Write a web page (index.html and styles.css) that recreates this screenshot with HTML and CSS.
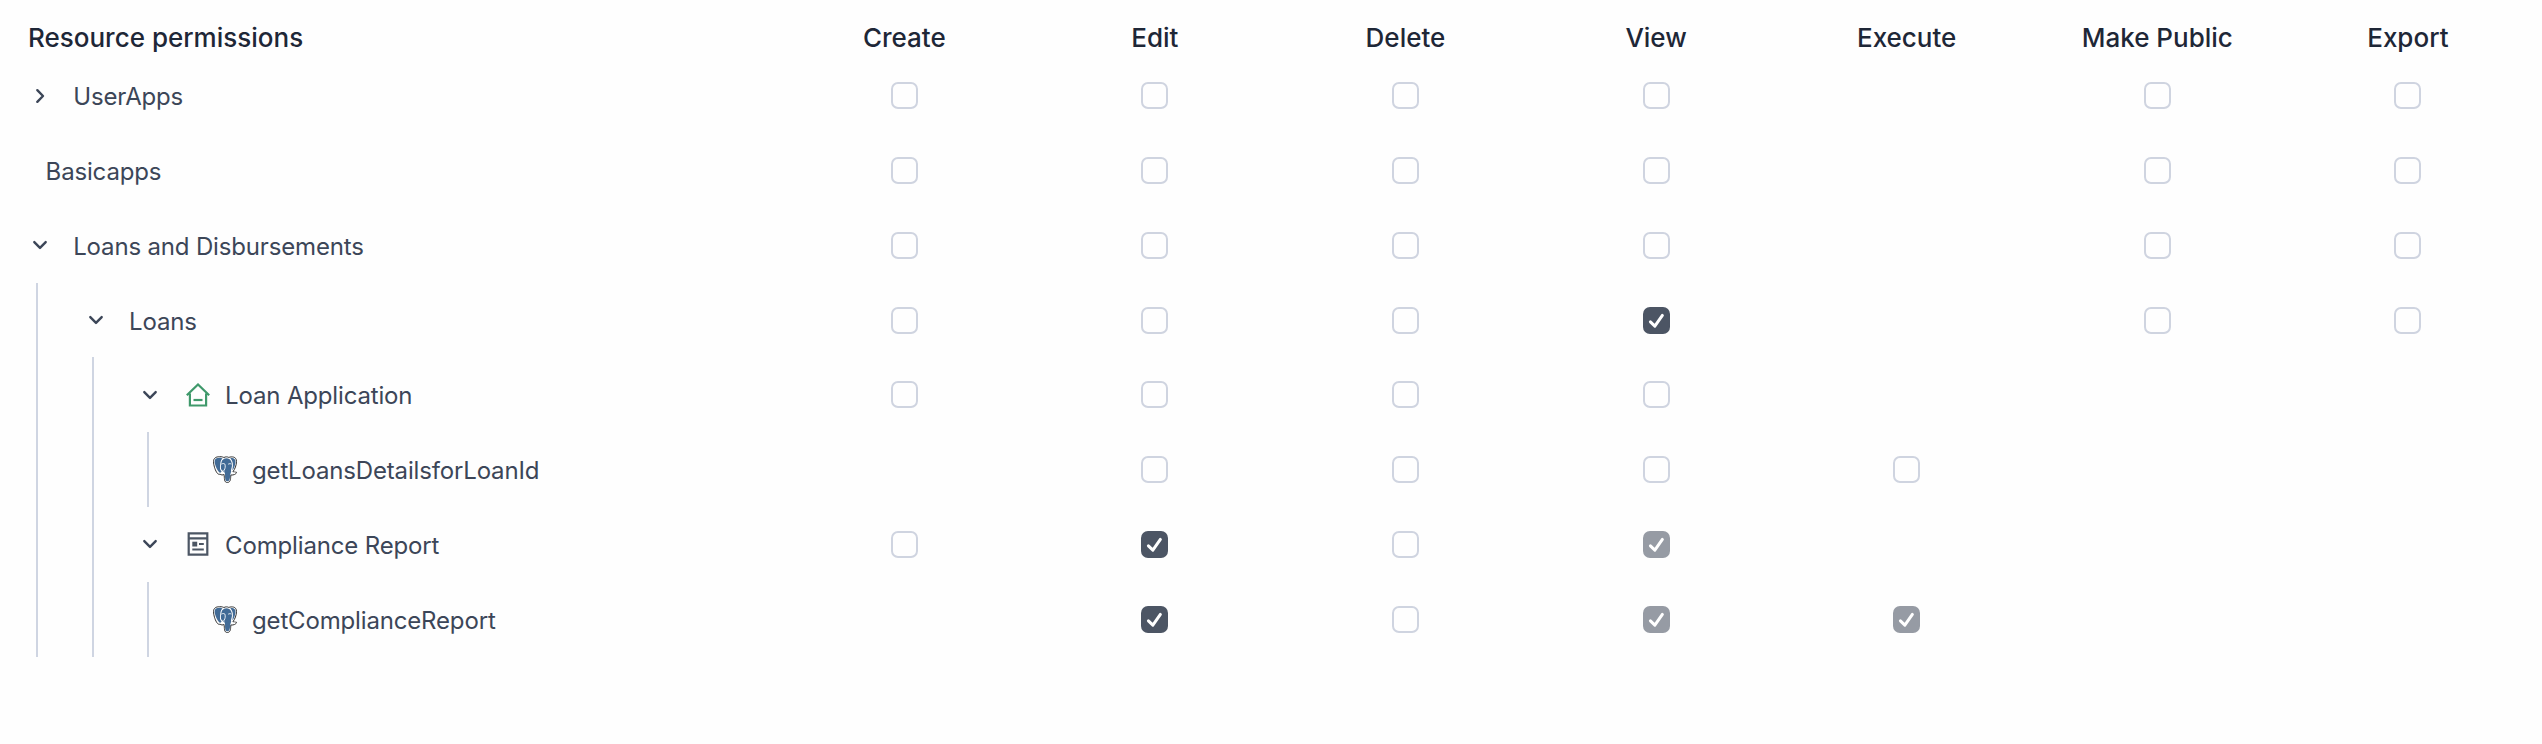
FILE: index.html
```html
<!DOCTYPE html>
<html lang="en">
<head>
<meta charset="utf-8">
<title>Resource permissions</title>
<link rel="stylesheet" href="styles.css">
</head>
<body>
<svg class="sprite" aria-hidden="true">
  <symbol id="right" viewBox="0 0 24 24"><path d="M9.300 6.200 15 12l-5.700 5.800" fill="none" stroke="#3c4658" stroke-width="2.4" stroke-linecap="round" stroke-linejoin="round"/></symbol>
  <symbol id="down" viewBox="0 0 24 24"><path d="M6.300 9.100 12 14.900l5.700-5.800" fill="none" stroke="#3c4658" stroke-width="2.4" stroke-linecap="round" stroke-linejoin="round"/></symbol>
  <symbol id="check" viewBox="0 0 28 28"><path d="m7.700 15.400 4.600 4.500 7.800-11.200" fill="none" stroke="#fff" stroke-width="3.100" stroke-linecap="round" stroke-linejoin="round"/></symbol>
  <symbol id="house" viewBox="0 0 24 24"><path d="M.8 12.300 12 1.500l11.200 10.800M3.900 10.500v12h16.200v-12" fill="none" stroke="#3f996b" stroke-width="2.200"/><path d="M7.500 17h9" stroke="#3f996b" stroke-width="2.200"/></symbol>
  <symbol id="report" viewBox="0 0 24 24"><path d="M2.700 1.300h18.600v21.400H2.700zM2.700 6.400h18.600" fill="none" stroke="#4c5664" stroke-width="2.200"/><path d="M6.300 9.700h4.900v4.800H6.300z" fill="#4c5664"/><path d="M13 12h4.800M6.300 17.500h11.500" stroke="#4c5664" stroke-width="2"/></symbol>
  <symbol id="pg" viewBox="0 0 24 27">
    <path d="M6.500.7C9 .5 10 1.300 11 1.500c1.500-.9 3.300-.8 4.800-.1C18.500.5 23.500.2 23.500 5.500c0 3.500-1.600 7.700-3.600 10.300 1.200.5 2.500.1 3.600.5-.3 2-2.800 2.900-5.600 2.700-.5 2.700.2 7.300-3.400 7.500-3.800.2-2.900-4.700-3.400-8-1.500.8-2.900.5-4.100-.4C4 20 .5 10.500.5 5.500.5 2 3.200.7 6.500.7z" fill="#fff" stroke="#333" stroke-width="1"/>
    <path d="M6.500 1.800c1.500 0 2.300.4 3.100.8C7 4.800 7.500 8 7 11c-.3 2 .7 3.500 1.700 4.500-.7 1.100-1.400 1.500-2.200.9C4 14.300 1.600 8.500 1.600 5.300c0-2.400 2-3.500 4.900-3.500zM17.300 2.200c2.600-.9 5.200.2 5.200 3.300 0 3-1.300 6.500-3 8.800-.3-1.400.5-3 .4-5 .1-2.800-.8-5.400-2.600-7.100z" fill="#426b96"/>
    <path d="M13.700 2.300c3.600 0 5.300 3.700 5.300 6.700 0 2.700-1.500 4.800-.8 6.800-1.700 2.900-.2 9.200-3.700 9.500-3.300.2-2.100-4.800-2.600-8.200-.2-1.400-2.900-2-3.800-4.200-.5-1.800.1-4.400.3-6.200.3-2.700 2.500-4.400 5.300-4.400z" fill="#426b96"/>
    <path d="M8.400 8.100c1.200-.7 2.700-.8 3.500 0 .7 2.400.3 4.300-.8 6.100M15.200 8.200c1-.6 2.200-.7 3.200-.1M18.100 16.200c1.700.8 3.200.8 4.500.6M8.700 15.800c.8-.9 1.700-1.200 2.900-.8" fill="none" stroke="#fff" stroke-width=".9"/>
  </symbol>
</svg>
<main class="permissions">
  <header class="row head">
    <h1 class="title">Resource permissions</h1>
    <span class="cell">Create</span><span class="cell">Edit</span><span class="cell">Delete</span><span class="cell">View</span><span class="cell">Execute</span><span class="cell">Make Public</span><span class="cell">Export</span>
  </header>

  <div class="row">
    <div class="tree level0"><svg class="toggle"><use href="#right"/></svg><span class="name">UserApps</span></div>
    <div class="cell"><i class="box"></i></div><div class="cell"><i class="box"></i></div><div class="cell"><i class="box"></i></div><div class="cell"><i class="box"></i></div><div class="cell"></div><div class="cell"><i class="box"></i></div><div class="cell"><i class="box"></i></div>
  </div>

  <div class="row">
    <div class="tree plain"><span class="name">Basicapps</span></div>
    <div class="cell"><i class="box"></i></div><div class="cell"><i class="box"></i></div><div class="cell"><i class="box"></i></div><div class="cell"><i class="box"></i></div><div class="cell"></div><div class="cell"><i class="box"></i></div><div class="cell"><i class="box"></i></div>
  </div>

  <div class="row">
    <div class="tree level0"><svg class="toggle"><use href="#down"/></svg><span class="name">Loans and Disbursements</span></div>
    <div class="cell"><i class="box"></i></div><div class="cell"><i class="box"></i></div><div class="cell"><i class="box"></i></div><div class="cell"><i class="box"></i></div><div class="cell"></div><div class="cell"><i class="box"></i></div><div class="cell"><i class="box"></i></div>
  </div>

  <div class="row">
    <div class="tree level1"><b class="guide g1"></b><svg class="toggle"><use href="#down"/></svg><span class="name">Loans</span></div>
    <div class="cell"><i class="box"></i></div><div class="cell"><i class="box"></i></div><div class="cell"><i class="box"></i></div><div class="cell"><i class="box on"><svg><use href="#check"/></svg></i></div><div class="cell"></div><div class="cell"><i class="box"></i></div><div class="cell"><i class="box"></i></div>
  </div>

  <div class="row">
    <div class="tree level2"><b class="guide g1"></b><b class="guide g2"></b><svg class="toggle"><use href="#down"/></svg><svg class="icon"><use href="#house"/></svg><span class="name">Loan Application</span></div>
    <div class="cell"><i class="box"></i></div><div class="cell"><i class="box"></i></div><div class="cell"><i class="box"></i></div><div class="cell"><i class="box"></i></div><div class="cell"></div><div class="cell"></div><div class="cell"></div>
  </div>

  <div class="row">
    <div class="tree level3"><b class="guide g1"></b><b class="guide g2"></b><b class="guide g3"></b><svg class="icon db"><use href="#pg"/></svg><span class="name">getLoansDetailsforLoanId</span></div>
    <div class="cell"></div><div class="cell"><i class="box"></i></div><div class="cell"><i class="box"></i></div><div class="cell"><i class="box"></i></div><div class="cell"><i class="box"></i></div><div class="cell"></div><div class="cell"></div>
  </div>

  <div class="row">
    <div class="tree level2"><b class="guide g1"></b><b class="guide g2"></b><svg class="toggle"><use href="#down"/></svg><svg class="icon"><use href="#report"/></svg><span class="name">Compliance Report</span></div>
    <div class="cell"><i class="box"></i></div><div class="cell"><i class="box on"><svg><use href="#check"/></svg></i></div><div class="cell"><i class="box"></i></div><div class="cell"><i class="box on muted"><svg><use href="#check"/></svg></i></div><div class="cell"></div><div class="cell"></div><div class="cell"></div>
  </div>

  <div class="row">
    <div class="tree level3"><b class="guide g1"></b><b class="guide g2"></b><b class="guide g3"></b><svg class="icon db"><use href="#pg"/></svg><span class="name">getComplianceReport</span></div>
    <div class="cell"></div><div class="cell"><i class="box on"><svg><use href="#check"/></svg></i></div><div class="cell"><i class="box"></i></div><div class="cell"><i class="box on muted"><svg><use href="#check"/></svg></i></div><div class="cell"><i class="box on muted"><svg><use href="#check"/></svg></i></div><div class="cell"></div><div class="cell"></div>
  </div>
</main>
</body>
</html>
```
FILE: styles.css
```css
body {
  margin: 0;
  background: #fefefe;
  font-family: Inter, "Liberation Sans", sans-serif;
}
.sprite { display: none; }
.permissions { width: 2534px; }
.row {
  display: grid;
  grid-template-columns: 779px repeat(7, 250.6px);
  height: 74.8px;
}
.head {
  height: 40.3px;
  padding: 18px 0 0;
  line-height: 40px;
  font-size: 26px;
  font-weight: 500;
  color: #1e2737;
}
.title {
  margin: 0;
  padding-left: 28px;
  font-size: 26px;
  font-weight: 500;
}
.cell {
  display: flex;
  align-items: center;
  justify-content: center;
}
.tree {
  display: flex;
  align-items: center;
}
.name {
  padding-top: 3px;
  font-size: 24px;
  line-height: 32px;
  letter-spacing: -0.16px;
  color: #3c4658;
  white-space: nowrap;
}
.toggle {
  flex: none;
  width: 24px;
  height: 24px;
}
.icon {
  flex: none;
  width: 24px;
  height: 24px;
  margin: 0 15.4px 0 24px;
}
.db {
  height: 27px;
  margin: 0 15px 0 64px;
}
.level0 .toggle { margin: 0 21.5px 0 27.7px; }
.level1 .toggle { margin: 0 21.5px 0 45.5px; }
.level2 .toggle { margin-left: 43.7px; }
.plain { padding-left: 45.6px; }
.guide {
  flex: none;
  align-self: stretch;
  width: 2px;
  background: #cfd5e2;
}
.g1 { margin-left: 36px; }
.g2 { margin-left: 54px; }
.g3 { margin-left: 53px; }
.box {
  box-sizing: border-box;
  width: 27px;
  height: 27px;
  border: 2px solid #cfd4e0;
  border-radius: 7px;
}
.box svg {
  display: block;
  width: 27px;
  height: 27px;
}
.on {
  border: 0;
  background: #4c5564;
}
.muted { background: #969ba4; }
```
